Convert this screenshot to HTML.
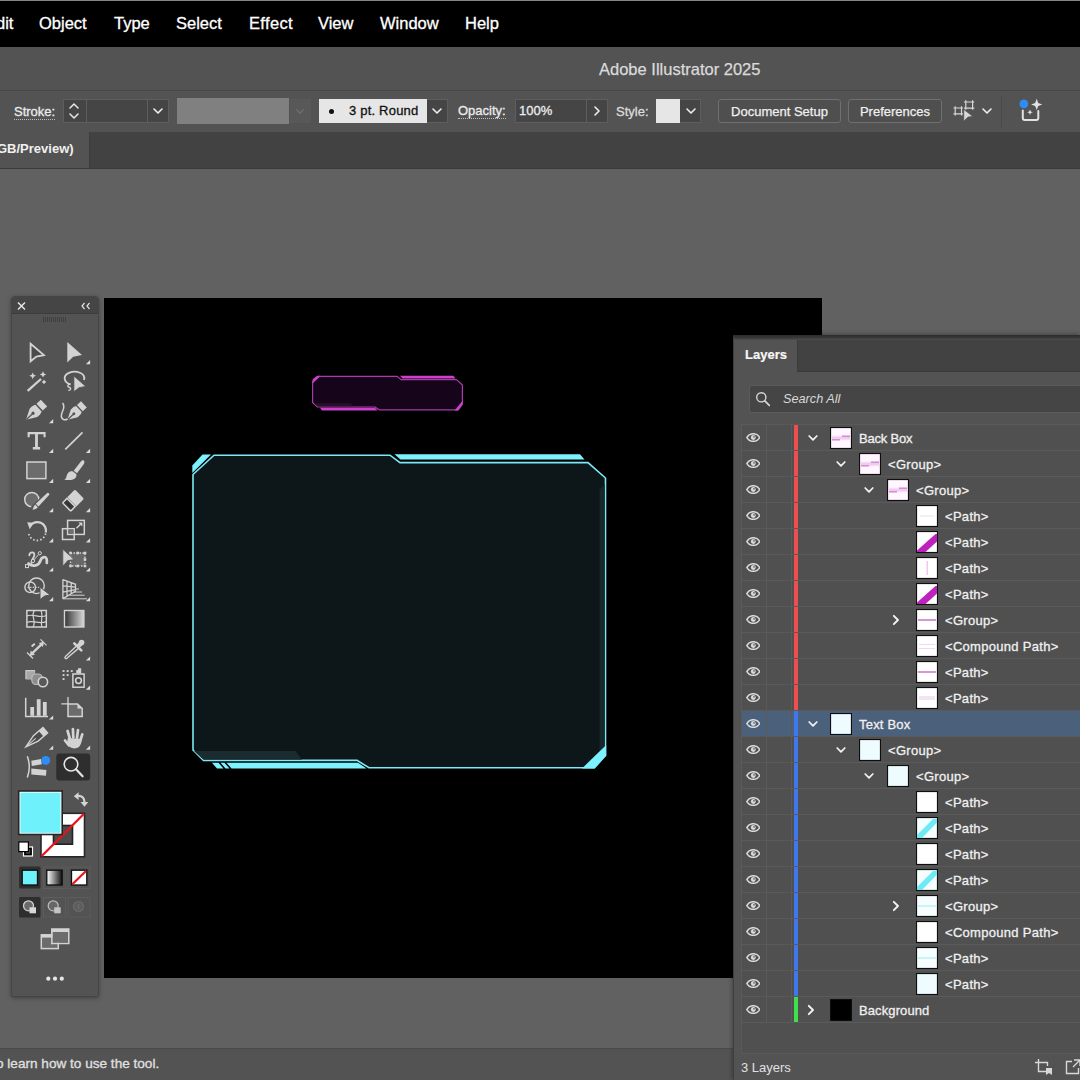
<!DOCTYPE html>
<html><head><meta charset="utf-8">
<style>
*{box-sizing:border-box;margin:0;padding:0}
html,body{width:1080px;height:1080px;overflow:hidden;background:#616161;font-family:"Liberation Sans",sans-serif;color:#e8e8e8}
.abs{position:absolute}
#menubar{left:0;top:0;width:1080px;height:48px;background:#000;border-top:1px solid #858585;border-bottom:1px solid #2b2b2b}
#menubar span{position:absolute;top:13px;font-size:16.5px;color:#fff;line-height:18px;white-space:nowrap;-webkit-text-stroke:0.3px}
#titlebar{left:0;top:47px;width:1080px;height:43px;background:#535353}
#title{left:599px;top:60px;font-size:16.5px;color:#dadada;white-space:nowrap;line-height:18px;-webkit-text-stroke:0.25px}
#ctrl{left:0;top:90px;width:1080px;height:42px;background:#535353;border-top:1px solid #474747}
#tabbar{left:0;top:132px;width:1080px;height:37px;background:#424242;border-bottom:1px solid #3a3a3a}
#tab{left:0;top:132px;width:90px;height:36px;background:#535353;border-right:1px solid #3c3c3c}
#tab span{position:absolute;left:-3px;top:9px;font-size:13px;font-weight:bold;color:#f0f0f0;white-space:nowrap}
.lbl{position:absolute;font-size:13px;color:#ececec;white-space:nowrap;line-height:16px;-webkit-text-stroke:0.3px}
.fld{position:absolute;background:#454545;border:1px solid #5e5e5e}
.btn{position:absolute;-webkit-text-stroke:0.25px;border:1px solid #707070;border-radius:3px;font-size:13px;color:#f0f0f0;text-align:center;line-height:23px;height:24px;background:#4f4f4f;white-space:nowrap}
#artboard{left:104px;top:298px;width:718px;height:680px;background:#000}
#status{left:0;top:1048px;width:1080px;height:32px;background:#535353;border-top:1px solid #4a4a4a}
#status span{-webkit-text-stroke:0.3px;position:absolute;left:-4px;top:7px;font-size:13.6px;color:#e0e0e0;white-space:nowrap}
#tools{left:11px;top:296px;width:88px;height:701px;background:#535353;border:1px solid #454545;border-radius:4px 4px 2px 2px;box-shadow:0 1px 4px rgba(0,0,0,.35)}
#toolshead{left:0;top:0;width:86px;height:17px;background:#454545;border-radius:3px 3px 0 0;border-bottom:1px solid #3c3c3c}
#layers{left:733px;top:335px;width:347px;height:745px;background:#535353;border-left:1px solid #3e3e3e;border-top:1px solid #3e3e3e;box-shadow:-1px -1px 4px rgba(0,0,0,.3)}
.ul{border-bottom:1px dotted #bdbdbd;padding-bottom:0;line-height:15px}
.lname{font-size:13px;color:#f0f0f0;line-height:16px;white-space:nowrap;-webkit-text-stroke:0.3px}
svg{display:block}
</style></head><body>
<div id="menubar" class="abs">
<span style="left:-15px">Edit</span><span style="left:39px">Object</span><span style="left:114px">Type</span><span style="left:176px">Select</span><span style="left:249px;letter-spacing:0.35px">Effect</span><span style="left:318px">View</span><span style="left:380px">Window</span><span style="left:465px">Help</span>
</div>
<div id="titlebar" class="abs"></div>
<div id="title" class="abs">Adobe Illustrator 2025</div>
<div id="ctrl" class="abs"></div>
<!-- control bar contents -->
<div class="lbl ul" style="left:14px;top:104px;">Stroke:</div>
<div class="fld" style="left:63px;top:99px;width:23px;height:24px;border-right:none"></div>
<svg class="abs" style="left:67px;top:101px" width="14" height="20" viewBox="0 0 14 20"><path d="M3 7 L7 3 L11 7 M3 13 L7 17 L11 13" fill="none" stroke="#e8e8e8" stroke-width="1.5" stroke-linecap="round" stroke-linejoin="round"/></svg>
<div class="fld" style="left:86px;top:99px;width:62px;height:24px;background:#454545"></div>
<div class="fld" style="left:148px;top:99px;width:21px;height:24px;border-left:none"></div>
<svg class="abs chev" style="left:152px;top:107px" width="12" height="8" viewBox="0 0 12 8"><path d="M2 2 L6 6 L10 2" fill="none" stroke="#f0f0f0" stroke-width="1.6" stroke-linecap="round" stroke-linejoin="round"/></svg>
<div class="abs" style="left:177px;top:98px;width:112px;height:26px;background:#808080"></div>
<div class="abs" style="left:290px;top:99px;width:21px;height:24px;background:#585858"></div>
<svg class="abs" style="left:295px;top:108px" width="10" height="7" viewBox="0 0 12 8"><path d="M2 2 L6 6 L10 2" fill="none" stroke="#6e6e6e" stroke-width="1.6" stroke-linecap="round" stroke-linejoin="round"/></svg>
<div class="abs" style="left:319px;top:99px;width:108px;height:24px;background:#e6e6e6"></div>
<div class="abs" style="left:329px;top:109px;width:5px;height:5px;border-radius:50%;background:#111"></div>
<div class="lbl" style="left:349px;top:103px;color:#111;letter-spacing:0.2px">3 pt. Round</div>
<div class="fld" style="left:427px;top:99px;width:21px;height:24px;border-left:none"></div>
<svg class="abs" style="left:431px;top:107px" width="12" height="8" viewBox="0 0 12 8"><path d="M2 2 L6 6 L10 2" fill="none" stroke="#f0f0f0" stroke-width="1.6" stroke-linecap="round" stroke-linejoin="round"/></svg>
<div class="lbl ul" style="left:458px;top:103px;">Opacity:</div>
<div class="fld" style="left:515px;top:99px;width:72px;height:24px;"></div>
<div class="lbl" style="left:519px;top:103px;">100%</div>
<div class="fld" style="left:587px;top:99px;width:21px;height:24px;border-left:none"></div>
<svg class="abs" style="left:593px;top:105px" width="8" height="12" viewBox="0 0 8 12"><path d="M2 2 L6 6 L2 10" fill="none" stroke="#f0f0f0" stroke-width="1.6" stroke-linecap="round" stroke-linejoin="round"/></svg>
<div class="lbl" style="left:616px;top:104px;color:#dcdcdc">Style:</div>
<div class="abs" style="left:656px;top:99px;width:24px;height:24px;background:#e6e6e6"></div>
<div class="fld" style="left:680px;top:99px;width:21px;height:24px;border-left:none"></div>
<svg class="abs" style="left:685px;top:107px" width="12" height="8" viewBox="0 0 12 8"><path d="M2 2 L6 6 L10 2" fill="none" stroke="#f0f0f0" stroke-width="1.6" stroke-linecap="round" stroke-linejoin="round"/></svg>
<div class="btn" style="left:718px;top:99px;width:123px;">Document Setup</div>
<div class="btn" style="left:848px;top:99px;width:94px;">Preferences</div>
<svg class="abs" style="left:940px;top:90px" width="120" height="42" viewBox="940 90 120 42"><g fill="none" stroke="#d8d8d8" stroke-width="1.200"><path d="M953.500,108 H963 M953.500,113.800 H963 M955.200,106.300 V115.500 M961.500,106.300 V115.500"/><path d="M964,102 H974.300 M964,108.200 H974.300 M965.800,100.300 V109.800 M972.600,100.300 V109.800"/></g><path d="M963.800,109.500 L972.600,116.300 L968,117 L963.800,121 Z" fill="#d8d8d8" stroke="#535353" stroke-width="0.600"/></svg>
<svg class="abs" style="left:981px;top:107px" width="12" height="8" viewBox="0 0 12 8"><path d="M2 2 L6 6 L10 2" fill="none" stroke="#f0f0f0" stroke-width="1.6" stroke-linecap="round" stroke-linejoin="round"/></svg>
<div class="abs" style="left:1001px;top:95px;width:1px;height:32px;background:#494949"></div>
<svg class="abs" style="left:1010px;top:92px" width="40" height="38" viewBox="1010 92 40 38"><path d="M1022.800,110.500 V118 a2,2 0 0 0 2,2 H1036.300 a2,2 0 0 0 2,-2 V111" fill="none" stroke="#e2e2e2" stroke-width="2" stroke-linecap="round"/><path d="M1036.700,98.800 l1.500,4.100 4.100,1.500 -4.100,1.500 -1.500,4.100 -1.500,-4.100 -4.100,-1.500 4.100,-1.500z" fill="#e2e2e2"/><path d="M1030,109.400 l.8,2 2,.8 -2,.8 -.8,2 -.8,-2 -2,-.8 2,-.8z" fill="#e2e2e2"/><circle cx="1023.900" cy="103.900" r="4.400" fill="#2f8cf2"/></svg>
<div id="tabbar" class="abs"></div>
<div id="tab" class="abs"><span>GB/Preview)</span></div>
<div id="artboard" class="abs"></div>
<!--ART--><svg class="abs" style="left:104px;top:298px" width="718" height="680" viewBox="104 298 718 680">
<!-- magenta back box -->
<path d="M312.6,381.600 L319.500,376.300 L397,376.300 L401,379.600 L456.500,379.600 L462.400,385 L462.400,402.600 L457.500,409.800 L379,409.800 L375,407 L317.500,407 L312.600,402.500 Z" fill="#16041a" stroke="#a73ba9" stroke-width="1.2" stroke-linejoin="round"/>
<path d="M312.600,383.500 L312.600,379.300 L317,375.800 L320.500,375.800 Z" fill="#cc40cc"/>
<path d="M400,375.700 L453.500,375.700 L455.500,378.400 L402.500,378.400 Z" fill="#cc40cc"/>
<path d="M320,407.700 L375,407.700 L377.500,410.400 L322,410.400 Z" fill="#cc40cc"/>
<path d="M462.800,400.500 L462.800,404.500 L458.500,410.400 L454.500,410.400 Z" fill="#cc40cc"/>
<path d="M313.800,403.200 L351,403.200 L353,406.300 L317.500,406.300 Z" fill="#2a0f2d"/>
<!-- cyan text box -->
<path d="M193,474.500 L214,455.200 L390,455.200 L400,462.600 L588,462.600 L605.500,478 L605.500,755.500 L594.500,767.700 L369,767.700 L357,760.400 L203.500,760.400 L193,750 Z" fill="#0d1719" stroke="#7ceaf6" stroke-width="1.6" stroke-linejoin="miter"/>
<path d="M194,751 L295.500,751 L302,759.700 L203.500,759.700 Z" fill="#1a2c2f"/>
<path d="M599.500,490 L604.700,484 L604.700,755 L599.500,760 Z" fill="#17272a"/>
<path d="M192.300,465.500 L202.500,454.500 L211,454.500 L192.300,473 Z" fill="#7df2fe"/>
<path d="M394.500,454.300 L580,454.300 L584.500,459.600 L400.500,459.600 Z" fill="#7df2fe"/>
<path d="M606.200,745 L606.200,755.500 L594.500,768.400 L582,768.400 Z" fill="#7df2fe"/>
<path d="M212,762.700 L218.500,762.700 L223.500,768.400 L217,768.400 Z" fill="#7df2fe"/>
<path d="M220.500,762.700 L224.500,762.700 L229.500,768.400 L225.500,768.400 Z" fill="#7df2fe"/>
<path d="M226.500,762.700 L358,762.700 L366.500,768.400 L231.500,768.400 Z" fill="#7df2fe"/>
</svg>
<!--/ART-->
<div id="status" class="abs"><span>o learn how to use the tool.</span></div>
<div id="tools" class="abs"><div id="toolshead" class="abs"></div></div>
<!--TOOLS--><svg class="abs" style="left:11px;top:296px" width="88" height="701" viewBox="11 296 88 701"><path d="M18,302.500 L25,309.500 M25,302.500 L18,309.500" stroke="#e6e6e6" stroke-width="1.500" fill="none"/>
<path d="M84.500,303 L82,306 L84.500,309 M89.500,303 L87,306 L89.500,309" stroke="#e0e0e0" stroke-width="1.200" fill="none"/>
<g stroke="#3f3f3f" stroke-width="1"><path d="M43.5,317 V322"/><path d="M45.5,317 V322"/><path d="M47.5,317 V322"/><path d="M49.5,317 V322"/><path d="M51.5,317 V322"/><path d="M53.5,317 V322"/><path d="M55.5,317 V322"/><path d="M57.5,317 V322"/><path d="M59.5,317 V322"/><path d="M61.5,317 V322"/><path d="M63.5,317 V322"/><path d="M65.5,317 V322"/></g>
<path d="M90.1,360.1 V364.3 H85.89999999999999 Z" fill="#dcdcdc"/>
<path d="M53.2,419.1 V423.3 H49.0 Z" fill="#dcdcdc"/>
<path d="M53.2,448.8 V453 H49.0 Z" fill="#dcdcdc"/>
<path d="M90.1,448.8 V453 H85.89999999999999 Z" fill="#dcdcdc"/>
<path d="M53.2,478.8 V483 H49.0 Z" fill="#dcdcdc"/>
<path d="M90.1,478.8 V483 H85.89999999999999 Z" fill="#dcdcdc"/>
<path d="M53.2,508.09999999999997 V512.3 H49.0 Z" fill="#dcdcdc"/>
<path d="M90.1,508.09999999999997 V512.3 H85.89999999999999 Z" fill="#dcdcdc"/>
<path d="M53.2,538.1999999999999 V542.4 H49.0 Z" fill="#dcdcdc"/>
<path d="M90.1,538.1999999999999 V542.4 H85.89999999999999 Z" fill="#dcdcdc"/>
<path d="M53.2,567.4 V571.6 H49.0 Z" fill="#dcdcdc"/>
<path d="M90.1,567.4 V571.6 H85.89999999999999 Z" fill="#dcdcdc"/>
<path d="M53.2,597.0 V601.2 H49.0 Z" fill="#dcdcdc"/>
<path d="M90.1,597.0 V601.2 H85.89999999999999 Z" fill="#dcdcdc"/>
<path d="M90.1,656.4 V660.6 H85.89999999999999 Z" fill="#dcdcdc"/>
<path d="M90.1,685.5999999999999 V689.8 H85.89999999999999 Z" fill="#dcdcdc"/>
<path d="M53.2,715.4 V719.6 H49.0 Z" fill="#dcdcdc"/>
<path d="M53.2,745.5 V749.7 H49.0 Z" fill="#dcdcdc"/>
<path d="M90.1,745.5 V749.7 H85.89999999999999 Z" fill="#dcdcdc"/>
<path d="M30.600,343.700 L43.900,355.100 L36.400,356.500 L30.600,361.300 Z" fill="#4b4b4b" stroke="#d3d3d3" stroke-width="1.800" stroke-linejoin="miter"/>
<path d="M67.300,342 L82,355 L73.200,356.800 L67.300,362.600 Z" fill="#d3d3d3"/>
<path d="M27.600,390.800 L41,379" stroke="#d3d3d3" stroke-width="2.300" fill="none"/>
<path d="M32.7,372.40000000000003 L33.720000000000006,374.78000000000003 L36.1,375.8 L33.720000000000006,376.82 L32.7,379.2 L31.680000000000003,376.82 L29.300000000000004,375.8 L31.680000000000003,374.78000000000003 Z" fill="#d3d3d3"/>
<path d="M43,371.2 L44.02,373.38 L46.2,374.4 L44.02,375.41999999999996 L43,377.59999999999997 L41.98,375.41999999999996 L39.8,374.4 L41.98,373.38 Z" fill="#d3d3d3"/>
<path d="M44,379.7 L44.96,381.04 L46.3,382 L44.96,382.96 L44,384.3 L43.04,382.96 L41.7,382 L43.04,381.04 Z" fill="#d3d3d3"/>
<path d="M70.500,384.300 C63.500,382.500 62.500,375.500 69,372.800 C76,370 86,373 84,380" stroke="#d3d3d3" stroke-width="1.800" fill="none"/>
<path d="M70.500,384.300 c-3,-0.500 -3.500,2.500 -1.200,3 c2.200,0.500 1.500,3.300 -1,3" stroke="#d3d3d3" stroke-width="1.400" fill="none"/>
<path d="M73.900,376 L85.800,386.400 L79,387.700 L73.900,391.800 Z" fill="#d3d3d3" stroke="#535353" stroke-width="0.800"/>
<g transform="translate(26,419.8) rotate(47) scale(1.07)"><path d="M0,0 L-5.200,-9.500 C-5.600,-12.500 -5,-14.500 -4.200,-16 L4.200,-16 C5,-14.500 5.600,-12.500 5.200,-9.500 Z" fill="#d3d3d3"/><path d="M0,-0.500 L0,-8" stroke="#535353" stroke-width="1.200"/><circle cx="0" cy="-9" r="1.500" fill="#535353"/><rect x="-4.300" y="-23" width="8.600" height="5.600" fill="#d3d3d3"/></g>
<g transform="translate(67.4,419.8) rotate(47) scale(0.98)"><path d="M0,0 L-5.200,-9.500 C-5.600,-12.500 -5,-14.500 -4.200,-16 L4.200,-16 C5,-14.500 5.600,-12.500 5.200,-9.500 Z" fill="#d3d3d3"/><path d="M0,-0.500 L0,-8" stroke="#535353" stroke-width="1.200"/><circle cx="0" cy="-9" r="1.500" fill="#535353"/><rect x="-4.300" y="-23" width="8.600" height="5.600" fill="#d3d3d3"/></g>
<path d="M62.600,403 C66.500,408 60.500,412.500 61.300,416.500 C62,420.500 65.500,420.300 67.500,419" stroke="#d3d3d3" stroke-width="1.500" fill="none"/>
<path d="M27.600,432 H45.600 V437.200 H43.500 V434.300 H37.900 V447.100 H40.100 V449.400 H32.800 V447.100 H35.100 V434.300 H29.700 V437.200 H27.600 Z" fill="#d3d3d3"/>
<path d="M65.300,449.300 L82.500,432.300" stroke="#d3d3d3" stroke-width="1.700"/>
<rect x="26.900" y="462" width="19" height="16.600" fill="#6c6c6c" stroke="#d3d3d3" stroke-width="1.500"/>
<path d="M83.800,460.500 C84.800,461.500 84.500,463 83.500,464.500 L77,473.300 L73.700,470.700 L80.500,462 C81.600,460.500 82.800,459.900 83.800,460.500 Z" fill="#d3d3d3"/>
<path d="M73,471.500 L76.200,474.100 C77.500,477 74.500,479.800 71,480 C68.500,480.200 66,480 64.200,479.800 C67,478.300 66,475.500 68,473 C69.500,471.200 71.500,470.800 73,471.500 Z" fill="#d3d3d3"/>
<circle cx="31.800" cy="499.600" r="7.100" fill="#6c6c6c" stroke="#d3d3d3" stroke-width="1.500"/>
<path d="M48.300,494.300 L33,509.300" stroke="#535353" stroke-width="6.200"/>
<path d="M49.300,494.800 C49.800,493.600 48.200,492.300 47.200,493 L35.800,503.800 L38.500,506.500 Z" fill="#d3d3d3"/>
<path d="M35.200,504.500 L37.900,507.200 C36.500,509 34.500,509.700 32.300,509.600 C33.600,508.200 33.400,506 35.200,504.500 Z" fill="#d3d3d3"/>
<g transform="translate(67.200,506.400) rotate(45)"><path d="M-6.500,-10.500 V-15.900 a1.500,1.500 0 0 1 1.500,-1.500 H5 a1.500,1.500 0 0 1 1.500,1.500 V-6.500 H-6.500 Z" fill="#d3d3d3"/><path d="M-5.800,-5.500 H5.800 V-0.200 a1,1 0 0 1 -1,1 H-4.800 a1,1 0 0 1 -1,-1 Z" fill="#3c3c3c" stroke="#d3d3d3" stroke-width="1.500"/><rect x="-3.600" y="-3.800" width="7.200" height="2.800" fill="#333" stroke="#3c3c3c"/></g>
<path d="M30.300,525.800 A8.600,8.600 0 0 1 45.800,532.500" stroke="#d3d3d3" stroke-width="2.300" fill="none"/>
<path d="M27.200,522.200 L33.400,522.800 L29.800,529.300 Z" fill="#d3d3d3"/>
<path d="M45.600,533.500 A8.600,8.600 0 0 1 28.600,532.800" stroke="#d3d3d3" stroke-width="1.800" stroke-dasharray="1.500 2.100" fill="none"/>
<rect x="67.600" y="520.400" width="16.700" height="14" fill="#4e4e4e" stroke="#d3d3d3" stroke-width="1.500"/>
<rect x="62.500" y="528.700" width="11.700" height="10.800" fill="none" stroke="#d3d3d3" stroke-width="1.500"/>
<rect x="68.400" y="529.500" width="5" height="4.300" fill="#6e6e6e"/>
<path d="M76.500,528.200 L81.300,523.400" stroke="#d3d3d3" stroke-width="1.400"/><path d="M78.300,522.400 H82.300 V526.400 Z" fill="#d3d3d3"/>
<path d="M28.500,563.500 C33,567.500 39,565.500 40.500,560.500 C41.800,556.500 46.500,555.500 46.800,560 L46.800,563" stroke="#d3d3d3" stroke-width="2.700" fill="none" stroke-linecap="round"/>
<path d="M29.300,555.300 C29.800,551.300 35,551.300 34.300,555.500 C33.800,558.500 30.500,560 31.500,563" stroke="#d3d3d3" stroke-width="1.800" fill="none" stroke-linecap="round"/>
<path d="M33,561 L39.500,553.500" stroke="#d3d3d3" stroke-width="1"/><circle cx="39.800" cy="553.200" r="1.600" fill="#535353" stroke="#d3d3d3" stroke-width="1"/><circle cx="33" cy="561" r="1.600" fill="#535353" stroke="#d3d3d3" stroke-width="1"/>
<rect x="25.500" y="564.600" width="3" height="3" fill="#535353" stroke="#d3d3d3" stroke-width="1"/>
<rect x="70.500" y="553" width="14.500" height="13" fill="#676767" stroke="#d3d3d3" stroke-width="1.300" stroke-dasharray="1.600 1.400"/>
<rect x="69.2" y="551.7" width="2.600" height="2.600" fill="#d3d3d3"/>
<rect x="83.7" y="551.7" width="2.600" height="2.600" fill="#d3d3d3"/>
<rect x="83.7" y="564.7" width="2.600" height="2.600" fill="#d3d3d3"/>
<rect x="69.2" y="564.7" width="2.600" height="2.600" fill="#d3d3d3"/>
<rect x="76.4" y="551.7" width="2.600" height="2.600" fill="#d3d3d3"/>
<rect x="76.4" y="564.7" width="2.600" height="2.600" fill="#d3d3d3"/>
<rect x="83.7" y="558.2" width="2.600" height="2.600" fill="#d3d3d3"/>
<path d="M62.800,549.200 L74.200,559.600 L67.800,560.600 L62.800,566.200 Z" fill="#d3d3d3" stroke="#535353" stroke-width="0.800"/>
<circle cx="36.500" cy="585.800" r="7.800" fill="none" stroke="#d3d3d3" stroke-width="1.400"/>
<circle cx="30.200" cy="587.300" r="5.300" fill="none" stroke="#d3d3d3" stroke-width="1.400"/>
<path d="M27.500,587.300 H40" stroke="#d3d3d3" stroke-width="1.300" stroke-dasharray="1.300 1.300"/>
<path d="M40,587 L50,595 L44.600,596.100 L40,599.600 Z" fill="#d3d3d3" stroke="#535353" stroke-width="1"/>
<g stroke="#d3d3d3" stroke-width="1.300" fill="none"><path d="M62.900,579.200 V599 M62.900,579.600 L75.500,584.300 V591.200 L62.900,598.600 M67,581.200 V596.300 M71.200,582.700 V593.800 M62.900,585.800 L75.500,587.200 M62.900,592.200 L75.500,589.600"/><path d="M75.500,589 H79 M73.500,592 H82 M69.500,595.200 H84.500 M62.900,598.800 H87" stroke-width="1"/></g>
<rect x="26.900" y="610.500" width="19.400" height="16.500" fill="#474747" stroke="#d3d3d3" stroke-width="1.500"/>
<g stroke="#d3d3d3" stroke-width="1.200" fill="none"><path d="M34.500,610.500 C30,616 37,621 33,627"/><path d="M41,610.500 C43.500,616 40,622 42,627"/><path d="M26.900,616 C33,613 40,619 46.300,615.500"/><path d="M26.900,622.500 C33,619.500 40,625 46.300,621.500"/></g>
<defs><linearGradient id="gg" x1="0" x2="1"><stop offset="0" stop-color="#333"/><stop offset="1" stop-color="#d8d8d8"/></linearGradient><linearGradient id="g2" x1="0" x2="1"><stop offset="0" stop-color="#fff"/><stop offset="1" stop-color="#111"/></linearGradient></defs>
<rect x="64.500" y="610.500" width="19.400" height="16.500" fill="url(#gg)" stroke="#d3d3d3" stroke-width="1.400"/>
<path d="M31.500,654 L42.200,643.600" stroke="#d3d3d3" stroke-width="2.400"/>
<path d="M27,652.500 L33,658.500 M40.500,639.400 L46.500,645.400" stroke="#d3d3d3" stroke-width="1.300"/>
<path d="M29.600,655.900 L30.800,650.600 L34.900,654.700 Z M44.100,641.700 L42.900,647 L38.800,642.900 Z" fill="#d3d3d3"/>
<path d="M31.600,646.600 L34.800,643.800" stroke="#d3d3d3" stroke-width="2"/>
<path d="M76.200,646.200 L65.500,656.400 C64.200,657.700 65.300,659.300 66.900,658.300 L78.400,648.400" fill="#4b4b4b" stroke="#d3d3d3" stroke-width="1.400"/>
<path d="M74.300,643.300 L81.300,650.300" stroke="#d3d3d3" stroke-width="2.600" stroke-linecap="round"/>
<path d="M78,646.500 L81.500,642.800" stroke="#d3d3d3" stroke-width="4.400" stroke-linecap="butt"/><circle cx="81.600" cy="642.600" r="2.800" fill="#d3d3d3"/>
<rect x="25.300" y="670" width="9.800" height="9.300" fill="#c9c9c9"/><rect x="26.500" y="671.200" width="8.600" height="8.100" fill="#a8a8a8"/>
<rect x="31.800" y="674" width="10.500" height="10.500" rx="4.200" fill="#8d8d8d" stroke="#bdbdbd" stroke-width="1.200"/>
<circle cx="42.900" cy="682" r="4.700" fill="#595959" stroke="#d3d3d3" stroke-width="1.600"/>
<rect x="62.6" y="670.1" width="1.900" height="1.900" fill="#d3d3d3"/>
<rect x="66.69999999999999" y="670.1" width="1.900" height="1.900" fill="#d3d3d3"/>
<rect x="70.8" y="670.1" width="1.900" height="1.900" fill="#d3d3d3"/>
<rect x="62.6" y="674.1" width="1.900" height="1.900" fill="#d3d3d3"/>
<rect x="66.69999999999999" y="674.1" width="1.900" height="1.900" fill="#d3d3d3"/>
<rect x="62.6" y="678.1" width="1.900" height="1.900" fill="#d3d3d3"/>
<rect x="72.900" y="674" width="11.200" height="13.200" fill="#4b4b4b" stroke="#d3d3d3" stroke-width="1.500"/>
<circle cx="78.500" cy="680.600" r="2.900" fill="none" stroke="#d3d3d3" stroke-width="1.600"/>
<path d="M76.300,673.500 V670 H78 V668.300 H81.200 V673.500 Z" fill="#d3d3d3"/>
<path d="M25.700,697.800 V716.500 H48" stroke="#d3d3d3" stroke-width="1.500" fill="none"/>
<rect x="30.300" y="707" width="3.800" height="8.800" fill="#d3d3d3"/><rect x="36.800" y="699.200" width="3.800" height="16.600" fill="#d3d3d3"/><rect x="42.900" y="702" width="3.800" height="13.800" fill="#d3d3d3"/>
<path d="M68,703.900 H77.500 L82.200,708.600 V716.400 H68 Z" fill="#6c6c6c" stroke="#d3d3d3" stroke-width="1.500"/>
<path d="M77.500,703.900 V708.600 H82.200 Z" fill="#d3d3d3"/>
<path d="M61.300,703.900 H68 M68,697 V703.900" stroke="#d3d3d3" stroke-width="1.300"/>
<g transform="translate(25.900,746.800) rotate(49.500)"><path d="M0,0 L-3.600,-13 V-25.500 H3.600 V-13 Z" fill="#4b4b4b" stroke="#d3d3d3" stroke-width="1.400" stroke-linejoin="miter"/><rect x="-3.600" y="-25.500" width="7.200" height="5.500" fill="#d3d3d3"/><path d="M0,-1 V-13" stroke="#d3d3d3" stroke-width="1"/></g>
<g stroke="#d3d3d3" stroke-width="2.700" stroke-linecap="round" fill="none"><path d="M69.800,738.500 L67.600,731"/><path d="M73.300,737.500 L72.900,729"/><path d="M77,737.800 L78,730"/><path d="M80.300,740.500 L82.300,734.300"/><path d="M69,745.300 L65,740.500"/></g>
<path d="M67.800,738 L81.800,739 C81.500,743.500 80,747.500 76,748.300 C72,749 69,747.200 67,743.500 Z" fill="#d3d3d3"/>
<path d="M27.300,756.200 C29.800,763 29.800,771 27.300,777.500" stroke="#d3d3d3" stroke-width="1.500" fill="none"/>
<path d="M31.300,760.800 L41,759 L41.800,764.300 L31.800,766 Z" fill="#d3d3d3"/><path d="M31.300,768.500 L46.400,770 L46,775.800 L31.300,774.600 Z" fill="#d3d3d3"/>
<circle cx="45.700" cy="760.400" r="4.500" fill="#2d8df5"/>
<rect x="56.300" y="753.400" width="33.900" height="27" rx="3" fill="#2e2e2e"/>
<circle cx="71" cy="764.200" r="6.800" fill="none" stroke="#e4e4e4" stroke-width="1.600"/><path d="M76,769.300 L82.600,776.300" stroke="#e4e4e4" stroke-width="2.200" stroke-linecap="round"/>
<rect x="41" y="813.300" width="43.500" height="43.500" fill="#fff" stroke="#262626" stroke-width="1.600"/>
<rect x="53.500" y="825.500" width="19" height="18.700" fill="#4b4b4b" stroke="#222" stroke-width="1.600"/>
<path d="M41.500,856.300 L84,813.800" stroke="#e8141c" stroke-width="2.300"/>
<rect x="18.700" y="791" width="43.500" height="43.500" fill="#fff" stroke="#262626" stroke-width="1.600"/>
<rect x="20.400" y="792.700" width="40.100" height="40.100" fill="#6ff1fb"/>
<path d="M77.500,796 C82.500,795.500 84.500,798.500 84.500,802.500" stroke="#d3d3d3" stroke-width="2.200" fill="none"/>
<path d="M73.800,796.300 L78.600,792.200 L78.600,800 Z M84.500,806.800 L80.500,802 L88.300,802 Z" fill="#d3d3d3"/>
<rect x="23.500" y="847" width="9" height="9" fill="#000" stroke="#fff" stroke-width="1.200"/><rect x="25.800" y="849.300" width="4.400" height="4.400" fill="#4b4b4b"/>
<rect x="18.800" y="842" width="9.600" height="9.600" fill="#fff" stroke="#000" stroke-width="1.200"/>
<rect x="19" y="866.500" width="21.500" height="22" rx="1.500" fill="#2e2e2e"/>
<rect x="43.500" y="867" width="21.800" height="21.500" fill="none" stroke="#5d5d5d" stroke-width="1"/>
<rect x="68" y="867" width="22" height="21.500" fill="none" stroke="#5d5d5d" stroke-width="1"/>
<rect x="22.200" y="870.200" width="15.300" height="14.800" fill="#6ff1fb" stroke="#0c0c0c" stroke-width="1.300"/>
<rect x="46.800" y="870.200" width="15.300" height="14.800" fill="url(#g2)" stroke="#0c0c0c" stroke-width="1.300"/>
<rect x="71.500" y="870.200" width="15.300" height="14.800" fill="#fff" stroke="#0c0c0c" stroke-width="1.300"/><path d="M72.300,884.300 L86,871" stroke="#e8141c" stroke-width="2.200"/>
<rect x="19" y="897" width="21.500" height="20.500" rx="1.500" fill="#2e2e2e"/>
<rect x="43.500" y="897.500" width="21.800" height="19.500" fill="none" stroke="#5d5d5d" stroke-width="1"/>
<rect x="68" y="897.500" width="22" height="19.500" fill="none" stroke="#5d5d5d" stroke-width="1"/>
<circle cx="28.5" cy="905.8" r="5" fill="#6a6a6a" stroke="#cfcfcf" stroke-width="1.300"/><rect x="29.5" y="907.3" width="6.500" height="6" fill="#d8d8d8"/>
<circle cx="53.2" cy="905.8" r="5" fill="#666" stroke="#b9b9b9" stroke-width="1.300"/><rect x="54.2" y="907.3" width="6.500" height="6" fill="#c4c4c4"/>
<circle cx="78.500" cy="906.500" r="5" fill="#5d5d5d" stroke="#6a6a6a" stroke-width="1.200"/><path d="M78.500,904 V909" stroke="#6a6a6a" stroke-width="1.500"/>
<rect x="51.800" y="929" width="17" height="14.500" fill="#6c6c6c" stroke="#d3d3d3" stroke-width="1.500"/><rect x="51.800" y="929" width="17" height="3" fill="#d3d3d3"/>
<rect x="41.300" y="934.800" width="17" height="13.800" fill="#6c6c6c" stroke="#d3d3d3" stroke-width="1.500"/><rect x="41.300" y="934.800" width="17" height="2.800" fill="#d3d3d3"/>
<rect x="52.500" y="932" width="15.500" height="10.700" fill="#6c6c6c"/><rect x="51.100" y="931.500" width="1.500" height="12.700" fill="#d3d3d3"/><rect x="51.100" y="942.800" width="8" height="1.400" fill="#d3d3d3"/>
<circle cx="48.3" cy="978.700" r="2.100" fill="#e6e6e6"/>
<circle cx="55" cy="978.700" r="2.100" fill="#e6e6e6"/>
<circle cx="61.8" cy="978.700" r="2.100" fill="#e6e6e6"/></svg><!--/TOOLS-->
<!--LAY--><div id="layers" class="abs">
<div class="abs" style="left:-1px;top:-1px;width:347px;height:5px;background:linear-gradient(#2c2c2c,#3a3a3a 60%,#505050)"></div>
<div class="abs" style="left:63px;top:4px;width:283px;height:32px;background:#424242;border-left:1px solid #3a3a3a;border-bottom:1px solid #3a3a3a"></div>
<div class="abs" style="left:11px;top:11px;font-size:13px;font-weight:bold;color:#f6f6f6;line-height:16px;-webkit-text-stroke:0.2px">Layers</div>
<div class="abs" style="left:15px;top:49px;width:340px;height:28px;background:#454545;border:1px solid #5c5c5c;border-radius:3px"></div>
<svg class="abs" style="left:21px;top:55px" width="16" height="16" viewBox="0 0 16 16"><circle cx="6.300" cy="6.300" r="4.600" fill="none" stroke="#d6d6d6" stroke-width="1.400"/><path d="M9.800,9.800 L14.300,14.300" stroke="#d6d6d6" stroke-width="1.700" stroke-linecap="round"/></svg>
<div class="abs" style="left:49px;top:55px;font-size:12.7px;font-style:italic;color:#d8d8d8;line-height:16px;white-space:nowrap">Search All</div>
<div class="abs" style="left:7px;top:88px;width:339px;height:629px;background:#505050"></div>
<div class="abs" style="left:7px;top:717px;width:339px;height:1px;background:#5a5a5a"></div>
<div class="abs" style="left:7px;top:88px;width:339px;height:1px;background:#5a5a5a"></div>
<div class="abs" style="left:11.5px;top:96.5px;width:16px;height:10px;"><svg width="14.600" height="9.100" viewBox="0 0 16 10"><path d="M0.900,5 C3,1.500 5.500,0.800 8,0.800 C10.500,0.800 13,1.500 15.100,5 C13,8.500 10.500,9.200 8,9.200 C5.500,9.200 3,8.500 0.900,5 Z" fill="none" stroke="#dadada" stroke-width="1.700"/><circle cx="8" cy="5" r="2.700" fill="#dadada"/><circle cx="8.800" cy="4.300" r="0.900" fill="#555"/></svg></div>
<div class="abs" style="left:60px;top:89px;width:4px;height:25px;background:#f04d4f"></div>
<div class="abs" style="left:73px;top:98px;width:12px;height:8px;"><svg width="12" height="8" viewBox="-0.600 -0.400 13.200 8.800"><path d="M1.800,1.800 L6,6 L10.200,1.800" fill="none" stroke="#f4f4f4" stroke-width="1.900" stroke-linecap="round" stroke-linejoin="round"/></svg></div>
<div class="abs" style="left:96px;top:90.5px;width:22px;height:22px;"><svg width="22" height="22" viewBox="-1 -1 22 22" style="display:block"><rect x="-0.500" y="-0.500" width="21" height="21" fill="#fff6ff" stroke="#0e0e0e" stroke-width="1.200"/><g><rect x="1" y="7.800" width="18" height="4.400" fill="#f6dcf6"/><rect x="1" y="11.300" width="8" height="1.100" fill="#c470c4"/><rect x="11" y="7.600" width="8" height="1.100" fill="#c470c4"/><rect x="1" y="9.600" width="18" height="0.800" fill="#e6b4e6"/></g></svg></div>
<div class="abs lname" style="left:125px;top:94.5px;letter-spacing:-0.2px">Back Box</div>
<div class="abs" style="left:7px;top:114px;width:339px;height:1px;background:#5a5a5a"></div>
<div class="abs" style="left:11.5px;top:122.5px;width:16px;height:10px;"><svg width="14.600" height="9.100" viewBox="0 0 16 10"><path d="M0.900,5 C3,1.500 5.500,0.800 8,0.800 C10.500,0.800 13,1.500 15.100,5 C13,8.500 10.500,9.200 8,9.200 C5.500,9.200 3,8.500 0.900,5 Z" fill="none" stroke="#dadada" stroke-width="1.700"/><circle cx="8" cy="5" r="2.700" fill="#dadada"/><circle cx="8.800" cy="4.300" r="0.900" fill="#555"/></svg></div>
<div class="abs" style="left:60px;top:115px;width:4px;height:25px;background:#f04d4f"></div>
<div class="abs" style="left:101px;top:124px;width:12px;height:8px;"><svg width="12" height="8" viewBox="-0.600 -0.400 13.200 8.800"><path d="M1.800,1.800 L6,6 L10.200,1.800" fill="none" stroke="#f4f4f4" stroke-width="1.900" stroke-linecap="round" stroke-linejoin="round"/></svg></div>
<div class="abs" style="left:125px;top:116.5px;width:22px;height:22px;"><svg width="22" height="22" viewBox="-1 -1 22 22" style="display:block"><rect x="-0.500" y="-0.500" width="21" height="21" fill="#fff6ff" stroke="#0e0e0e" stroke-width="1.200"/><g><rect x="1" y="7.800" width="18" height="4.400" fill="#f6dcf6"/><rect x="1" y="11.300" width="8" height="1.100" fill="#c470c4"/><rect x="11" y="7.600" width="8" height="1.100" fill="#c470c4"/><rect x="1" y="9.600" width="18" height="0.800" fill="#e6b4e6"/></g></svg></div>
<div class="abs lname" style="left:154px;top:120.5px;letter-spacing:0.3px">&lt;Group&gt;</div>
<div class="abs" style="left:7px;top:140px;width:339px;height:1px;background:#5a5a5a"></div>
<div class="abs" style="left:11.5px;top:148.5px;width:16px;height:10px;"><svg width="14.600" height="9.100" viewBox="0 0 16 10"><path d="M0.900,5 C3,1.500 5.500,0.800 8,0.800 C10.500,0.800 13,1.500 15.100,5 C13,8.500 10.500,9.200 8,9.200 C5.500,9.200 3,8.500 0.900,5 Z" fill="none" stroke="#dadada" stroke-width="1.700"/><circle cx="8" cy="5" r="2.700" fill="#dadada"/><circle cx="8.800" cy="4.300" r="0.900" fill="#555"/></svg></div>
<div class="abs" style="left:60px;top:141px;width:4px;height:25px;background:#f04d4f"></div>
<div class="abs" style="left:129px;top:150px;width:12px;height:8px;"><svg width="12" height="8" viewBox="-0.600 -0.400 13.200 8.800"><path d="M1.800,1.800 L6,6 L10.200,1.800" fill="none" stroke="#f4f4f4" stroke-width="1.900" stroke-linecap="round" stroke-linejoin="round"/></svg></div>
<div class="abs" style="left:153px;top:142.5px;width:22px;height:22px;"><svg width="22" height="22" viewBox="-1 -1 22 22" style="display:block"><rect x="-0.500" y="-0.500" width="21" height="21" fill="#fff6ff" stroke="#0e0e0e" stroke-width="1.200"/><g><rect x="1" y="7.800" width="18" height="4.400" fill="#f6dcf6"/><rect x="1" y="11.300" width="8" height="1.100" fill="#c470c4"/><rect x="11" y="7.600" width="8" height="1.100" fill="#c470c4"/><rect x="1" y="9.600" width="18" height="0.800" fill="#e6b4e6"/></g></svg></div>
<div class="abs lname" style="left:182px;top:146.5px;letter-spacing:0.3px">&lt;Group&gt;</div>
<div class="abs" style="left:7px;top:166px;width:339px;height:1px;background:#5a5a5a"></div>
<div class="abs" style="left:11.5px;top:174.5px;width:16px;height:10px;"><svg width="14.600" height="9.100" viewBox="0 0 16 10"><path d="M0.900,5 C3,1.500 5.500,0.800 8,0.800 C10.500,0.800 13,1.500 15.100,5 C13,8.500 10.500,9.200 8,9.200 C5.500,9.200 3,8.500 0.900,5 Z" fill="none" stroke="#dadada" stroke-width="1.700"/><circle cx="8" cy="5" r="2.700" fill="#dadada"/><circle cx="8.800" cy="4.300" r="0.900" fill="#555"/></svg></div>
<div class="abs" style="left:60px;top:167px;width:4px;height:25px;background:#f04d4f"></div>
<div class="abs" style="left:182px;top:168.5px;width:22px;height:22px;"><svg width="22" height="22" viewBox="-1 -1 22 22" style="display:block"><rect x="-0.500" y="-0.500" width="21" height="21" fill="#fff" stroke="#0e0e0e" stroke-width="1.200"/><g><rect x="3" y="9.500" width="14" height="1" fill="#f0dff0"/></g></svg></div>
<div class="abs lname" style="left:211px;top:172.5px;letter-spacing:0.3px">&lt;Path&gt;</div>
<div class="abs" style="left:7px;top:192px;width:339px;height:1px;background:#5a5a5a"></div>
<div class="abs" style="left:11.5px;top:200.5px;width:16px;height:10px;"><svg width="14.600" height="9.100" viewBox="0 0 16 10"><path d="M0.900,5 C3,1.500 5.500,0.800 8,0.800 C10.500,0.800 13,1.500 15.100,5 C13,8.500 10.500,9.200 8,9.200 C5.500,9.200 3,8.500 0.900,5 Z" fill="none" stroke="#dadada" stroke-width="1.700"/><circle cx="8" cy="5" r="2.700" fill="#dadada"/><circle cx="8.800" cy="4.300" r="0.900" fill="#555"/></svg></div>
<div class="abs" style="left:60px;top:193px;width:4px;height:25px;background:#f04d4f"></div>
<div class="abs" style="left:182px;top:194.5px;width:22px;height:22px;"><svg width="22" height="22" viewBox="-1 -1 22 22" style="display:block"><rect x="-0.500" y="-0.500" width="21" height="21" fill="#fff" stroke="#0e0e0e" stroke-width="1.200"/><g><path d="M0,20 L0,18.500 L18.500,2 L20,2 L20,9.500 L8.500,20 Z" fill="#bd22bd"/></g></svg></div>
<div class="abs lname" style="left:211px;top:198.5px;letter-spacing:0.3px">&lt;Path&gt;</div>
<div class="abs" style="left:7px;top:218px;width:339px;height:1px;background:#5a5a5a"></div>
<div class="abs" style="left:11.5px;top:226.5px;width:16px;height:10px;"><svg width="14.600" height="9.100" viewBox="0 0 16 10"><path d="M0.900,5 C3,1.500 5.500,0.800 8,0.800 C10.500,0.800 13,1.500 15.100,5 C13,8.500 10.500,9.200 8,9.200 C5.500,9.200 3,8.500 0.900,5 Z" fill="none" stroke="#dadada" stroke-width="1.700"/><circle cx="8" cy="5" r="2.700" fill="#dadada"/><circle cx="8.800" cy="4.300" r="0.900" fill="#555"/></svg></div>
<div class="abs" style="left:60px;top:219px;width:4px;height:25px;background:#f04d4f"></div>
<div class="abs" style="left:182px;top:220.5px;width:22px;height:22px;"><svg width="22" height="22" viewBox="-1 -1 22 22" style="display:block"><rect x="-0.500" y="-0.500" width="21" height="21" fill="#fff" stroke="#0e0e0e" stroke-width="1.200"/><g><rect x="9.500" y="3" width="1.500" height="14" fill="#f2c8ee"/></g></svg></div>
<div class="abs lname" style="left:211px;top:224.5px;letter-spacing:0.3px">&lt;Path&gt;</div>
<div class="abs" style="left:7px;top:244px;width:339px;height:1px;background:#5a5a5a"></div>
<div class="abs" style="left:11.5px;top:252.5px;width:16px;height:10px;"><svg width="14.600" height="9.100" viewBox="0 0 16 10"><path d="M0.900,5 C3,1.500 5.500,0.800 8,0.800 C10.500,0.800 13,1.500 15.100,5 C13,8.500 10.500,9.200 8,9.200 C5.500,9.200 3,8.500 0.900,5 Z" fill="none" stroke="#dadada" stroke-width="1.700"/><circle cx="8" cy="5" r="2.700" fill="#dadada"/><circle cx="8.800" cy="4.300" r="0.900" fill="#555"/></svg></div>
<div class="abs" style="left:60px;top:245px;width:4px;height:25px;background:#f04d4f"></div>
<div class="abs" style="left:182px;top:246.5px;width:22px;height:22px;"><svg width="22" height="22" viewBox="-1 -1 22 22" style="display:block"><rect x="-0.500" y="-0.500" width="21" height="21" fill="#fff" stroke="#0e0e0e" stroke-width="1.200"/><g><path d="M0,20 L0,18.500 L18.500,2 L20,2 L20,9.500 L8.500,20 Z" fill="#bd22bd"/></g></svg></div>
<div class="abs lname" style="left:211px;top:250.5px;letter-spacing:0.3px">&lt;Path&gt;</div>
<div class="abs" style="left:7px;top:270px;width:339px;height:1px;background:#5a5a5a"></div>
<div class="abs" style="left:11.5px;top:278.5px;width:16px;height:10px;"><svg width="14.600" height="9.100" viewBox="0 0 16 10"><path d="M0.900,5 C3,1.500 5.500,0.800 8,0.800 C10.500,0.800 13,1.500 15.100,5 C13,8.500 10.500,9.200 8,9.200 C5.500,9.200 3,8.500 0.900,5 Z" fill="none" stroke="#dadada" stroke-width="1.700"/><circle cx="8" cy="5" r="2.700" fill="#dadada"/><circle cx="8.800" cy="4.300" r="0.900" fill="#555"/></svg></div>
<div class="abs" style="left:60px;top:271px;width:4px;height:25px;background:#f04d4f"></div>
<div class="abs" style="left:158px;top:278px;width:8px;height:12px;"><svg width="8" height="12" viewBox="0 0 8 12"><path d="M1.800,1.800 L6,6 L1.800,10.200" fill="none" stroke="#f4f4f4" stroke-width="1.900" stroke-linecap="round" stroke-linejoin="round"/></svg></div>
<div class="abs" style="left:182px;top:272.5px;width:22px;height:22px;"><svg width="22" height="22" viewBox="-1 -1 22 22" style="display:block"><rect x="-0.500" y="-0.500" width="21" height="21" fill="#fff" stroke="#0e0e0e" stroke-width="1.200"/><g><rect x="1" y="9.300" width="18" height="1.400" fill="#c868c8"/></g></svg></div>
<div class="abs lname" style="left:211px;top:276.5px;letter-spacing:0.3px">&lt;Group&gt;</div>
<div class="abs" style="left:7px;top:296px;width:339px;height:1px;background:#5a5a5a"></div>
<div class="abs" style="left:11.5px;top:304.5px;width:16px;height:10px;"><svg width="14.600" height="9.100" viewBox="0 0 16 10"><path d="M0.900,5 C3,1.500 5.500,0.800 8,0.800 C10.500,0.800 13,1.500 15.100,5 C13,8.500 10.500,9.200 8,9.200 C5.500,9.200 3,8.500 0.900,5 Z" fill="none" stroke="#dadada" stroke-width="1.700"/><circle cx="8" cy="5" r="2.700" fill="#dadada"/><circle cx="8.800" cy="4.300" r="0.900" fill="#555"/></svg></div>
<div class="abs" style="left:60px;top:297px;width:4px;height:25px;background:#f04d4f"></div>
<div class="abs" style="left:182px;top:298.5px;width:22px;height:22px;"><svg width="22" height="22" viewBox="-1 -1 22 22" style="display:block"><rect x="-0.500" y="-0.500" width="21" height="21" fill="#fff" stroke="#0e0e0e" stroke-width="1.200"/><g><rect x="2" y="8" width="16" height="1" fill="#f0d8f0"/><rect x="2" y="12" width="16" height="1" fill="#f0d8f0"/></g></svg></div>
<div class="abs lname" style="left:211px;top:302.5px;letter-spacing:0.3px">&lt;Compound Path&gt;</div>
<div class="abs" style="left:7px;top:322px;width:339px;height:1px;background:#5a5a5a"></div>
<div class="abs" style="left:11.5px;top:330.5px;width:16px;height:10px;"><svg width="14.600" height="9.100" viewBox="0 0 16 10"><path d="M0.900,5 C3,1.500 5.500,0.800 8,0.800 C10.500,0.800 13,1.500 15.100,5 C13,8.500 10.500,9.200 8,9.200 C5.500,9.200 3,8.500 0.900,5 Z" fill="none" stroke="#dadada" stroke-width="1.700"/><circle cx="8" cy="5" r="2.700" fill="#dadada"/><circle cx="8.800" cy="4.300" r="0.900" fill="#555"/></svg></div>
<div class="abs" style="left:60px;top:323px;width:4px;height:25px;background:#f04d4f"></div>
<div class="abs" style="left:182px;top:324.5px;width:22px;height:22px;"><svg width="22" height="22" viewBox="-1 -1 22 22" style="display:block"><rect x="-0.500" y="-0.500" width="21" height="21" fill="#fff" stroke="#0e0e0e" stroke-width="1.200"/><g><rect x="1" y="9.300" width="18" height="1.400" fill="#c868c8"/></g></svg></div>
<div class="abs lname" style="left:211px;top:328.5px;letter-spacing:0.3px">&lt;Path&gt;</div>
<div class="abs" style="left:7px;top:348px;width:339px;height:1px;background:#5a5a5a"></div>
<div class="abs" style="left:11.5px;top:356.5px;width:16px;height:10px;"><svg width="14.600" height="9.100" viewBox="0 0 16 10"><path d="M0.900,5 C3,1.500 5.500,0.800 8,0.800 C10.500,0.800 13,1.500 15.100,5 C13,8.500 10.500,9.200 8,9.200 C5.500,9.200 3,8.500 0.900,5 Z" fill="none" stroke="#dadada" stroke-width="1.700"/><circle cx="8" cy="5" r="2.700" fill="#dadada"/><circle cx="8.800" cy="4.300" r="0.900" fill="#555"/></svg></div>
<div class="abs" style="left:60px;top:349px;width:4px;height:25px;background:#f04d4f"></div>
<div class="abs" style="left:182px;top:350.5px;width:22px;height:22px;"><svg width="22" height="22" viewBox="-1 -1 22 22" style="display:block"><rect x="-0.500" y="-0.500" width="21" height="21" fill="#fff" stroke="#0e0e0e" stroke-width="1.200"/><g><rect x="2" y="8" width="16" height="4" fill="#f3e4f3"/></g></svg></div>
<div class="abs lname" style="left:211px;top:354.5px;letter-spacing:0.3px">&lt;Path&gt;</div>
<div class="abs" style="left:7px;top:374px;width:339px;height:26px;background:#4b607b"></div>
<div class="abs" style="left:7px;top:374px;width:339px;height:1px;background:#5a5a5a"></div>
<div class="abs" style="left:11.5px;top:382.5px;width:16px;height:10px;"><svg width="14.600" height="9.100" viewBox="0 0 16 10"><path d="M0.900,5 C3,1.500 5.500,0.800 8,0.800 C10.500,0.800 13,1.500 15.100,5 C13,8.500 10.500,9.200 8,9.200 C5.500,9.200 3,8.500 0.900,5 Z" fill="none" stroke="#dadada" stroke-width="1.700"/><circle cx="8" cy="5" r="2.700" fill="#dadada"/><circle cx="8.800" cy="4.300" r="0.900" fill="#555"/></svg></div>
<div class="abs" style="left:60px;top:375px;width:4px;height:25px;background:#3f78ee"></div>
<div class="abs" style="left:73px;top:384px;width:12px;height:8px;"><svg width="12" height="8" viewBox="-0.600 -0.400 13.200 8.800"><path d="M1.800,1.800 L6,6 L10.200,1.800" fill="none" stroke="#f4f4f4" stroke-width="1.900" stroke-linecap="round" stroke-linejoin="round"/></svg></div>
<div class="abs" style="left:96px;top:376.5px;width:22px;height:22px;"><svg width="22" height="22" viewBox="-1 -1 22 22" style="display:block"><rect x="-0.500" y="-0.500" width="21" height="21" fill="#eefcff" stroke="#0e0e0e" stroke-width="1.200"/><g></g></svg></div>
<div class="abs lname" style="left:125px;top:380.5px;letter-spacing:0.2px">Text Box</div>
<div class="abs" style="left:7px;top:400px;width:339px;height:1px;background:#5a5a5a"></div>
<div class="abs" style="left:11.5px;top:408.5px;width:16px;height:10px;"><svg width="14.600" height="9.100" viewBox="0 0 16 10"><path d="M0.900,5 C3,1.500 5.500,0.800 8,0.800 C10.500,0.800 13,1.500 15.100,5 C13,8.500 10.500,9.200 8,9.200 C5.500,9.200 3,8.500 0.900,5 Z" fill="none" stroke="#dadada" stroke-width="1.700"/><circle cx="8" cy="5" r="2.700" fill="#dadada"/><circle cx="8.800" cy="4.300" r="0.900" fill="#555"/></svg></div>
<div class="abs" style="left:60px;top:401px;width:4px;height:25px;background:#3f78ee"></div>
<div class="abs" style="left:101px;top:410px;width:12px;height:8px;"><svg width="12" height="8" viewBox="-0.600 -0.400 13.200 8.800"><path d="M1.800,1.800 L6,6 L10.200,1.800" fill="none" stroke="#f4f4f4" stroke-width="1.900" stroke-linecap="round" stroke-linejoin="round"/></svg></div>
<div class="abs" style="left:125px;top:402.5px;width:22px;height:22px;"><svg width="22" height="22" viewBox="-1 -1 22 22" style="display:block"><rect x="-0.500" y="-0.500" width="21" height="21" fill="#eefcff" stroke="#0e0e0e" stroke-width="1.200"/><g></g></svg></div>
<div class="abs lname" style="left:154px;top:406.5px;letter-spacing:0.3px">&lt;Group&gt;</div>
<div class="abs" style="left:7px;top:426px;width:339px;height:1px;background:#5a5a5a"></div>
<div class="abs" style="left:11.5px;top:434.5px;width:16px;height:10px;"><svg width="14.600" height="9.100" viewBox="0 0 16 10"><path d="M0.900,5 C3,1.500 5.500,0.800 8,0.800 C10.500,0.800 13,1.500 15.100,5 C13,8.500 10.500,9.200 8,9.200 C5.500,9.200 3,8.500 0.900,5 Z" fill="none" stroke="#dadada" stroke-width="1.700"/><circle cx="8" cy="5" r="2.700" fill="#dadada"/><circle cx="8.800" cy="4.300" r="0.900" fill="#555"/></svg></div>
<div class="abs" style="left:60px;top:427px;width:4px;height:25px;background:#3f78ee"></div>
<div class="abs" style="left:129px;top:436px;width:12px;height:8px;"><svg width="12" height="8" viewBox="-0.600 -0.400 13.200 8.800"><path d="M1.800,1.800 L6,6 L10.200,1.800" fill="none" stroke="#f4f4f4" stroke-width="1.900" stroke-linecap="round" stroke-linejoin="round"/></svg></div>
<div class="abs" style="left:153px;top:428.5px;width:22px;height:22px;"><svg width="22" height="22" viewBox="-1 -1 22 22" style="display:block"><rect x="-0.500" y="-0.500" width="21" height="21" fill="#eefcff" stroke="#0e0e0e" stroke-width="1.200"/><g></g></svg></div>
<div class="abs lname" style="left:182px;top:432.5px;letter-spacing:0.3px">&lt;Group&gt;</div>
<div class="abs" style="left:7px;top:452px;width:339px;height:1px;background:#5a5a5a"></div>
<div class="abs" style="left:11.5px;top:460.5px;width:16px;height:10px;"><svg width="14.600" height="9.100" viewBox="0 0 16 10"><path d="M0.900,5 C3,1.500 5.500,0.800 8,0.800 C10.500,0.800 13,1.500 15.100,5 C13,8.500 10.500,9.200 8,9.200 C5.500,9.200 3,8.500 0.900,5 Z" fill="none" stroke="#dadada" stroke-width="1.700"/><circle cx="8" cy="5" r="2.700" fill="#dadada"/><circle cx="8.800" cy="4.300" r="0.900" fill="#555"/></svg></div>
<div class="abs" style="left:60px;top:453px;width:4px;height:25px;background:#3f78ee"></div>
<div class="abs" style="left:182px;top:454.5px;width:22px;height:22px;"><svg width="22" height="22" viewBox="-1 -1 22 22" style="display:block"><rect x="-0.500" y="-0.500" width="21" height="21" fill="#fff" stroke="#0e0e0e" stroke-width="1.200"/><g></g></svg></div>
<div class="abs lname" style="left:211px;top:458.5px;letter-spacing:0.3px">&lt;Path&gt;</div>
<div class="abs" style="left:7px;top:478px;width:339px;height:1px;background:#5a5a5a"></div>
<div class="abs" style="left:11.5px;top:486.5px;width:16px;height:10px;"><svg width="14.600" height="9.100" viewBox="0 0 16 10"><path d="M0.900,5 C3,1.500 5.500,0.800 8,0.800 C10.500,0.800 13,1.500 15.100,5 C13,8.500 10.500,9.200 8,9.200 C5.500,9.200 3,8.500 0.900,5 Z" fill="none" stroke="#dadada" stroke-width="1.700"/><circle cx="8" cy="5" r="2.700" fill="#dadada"/><circle cx="8.800" cy="4.300" r="0.900" fill="#555"/></svg></div>
<div class="abs" style="left:60px;top:479px;width:4px;height:25px;background:#3f78ee"></div>
<div class="abs" style="left:182px;top:480.5px;width:22px;height:22px;"><svg width="22" height="22" viewBox="-1 -1 22 22" style="display:block"><rect x="-0.500" y="-0.500" width="21" height="21" fill="#f4feff" stroke="#0e0e0e" stroke-width="1.200"/><g><path d="M0,20 L0,17 L16,1 L20,1 L20,4.500 L5,20 Z" fill="#6ee9f6"/></g></svg></div>
<div class="abs lname" style="left:211px;top:484.5px;letter-spacing:0.3px">&lt;Path&gt;</div>
<div class="abs" style="left:7px;top:504px;width:339px;height:1px;background:#5a5a5a"></div>
<div class="abs" style="left:11.5px;top:512.5px;width:16px;height:10px;"><svg width="14.600" height="9.100" viewBox="0 0 16 10"><path d="M0.900,5 C3,1.500 5.500,0.800 8,0.800 C10.500,0.800 13,1.500 15.100,5 C13,8.500 10.500,9.200 8,9.200 C5.500,9.200 3,8.500 0.900,5 Z" fill="none" stroke="#dadada" stroke-width="1.700"/><circle cx="8" cy="5" r="2.700" fill="#dadada"/><circle cx="8.800" cy="4.300" r="0.900" fill="#555"/></svg></div>
<div class="abs" style="left:60px;top:505px;width:4px;height:25px;background:#3f78ee"></div>
<div class="abs" style="left:182px;top:506.5px;width:22px;height:22px;"><svg width="22" height="22" viewBox="-1 -1 22 22" style="display:block"><rect x="-0.500" y="-0.500" width="21" height="21" fill="#fff" stroke="#0e0e0e" stroke-width="1.200"/><g></g></svg></div>
<div class="abs lname" style="left:211px;top:510.5px;letter-spacing:0.3px">&lt;Path&gt;</div>
<div class="abs" style="left:7px;top:530px;width:339px;height:1px;background:#5a5a5a"></div>
<div class="abs" style="left:11.5px;top:538.5px;width:16px;height:10px;"><svg width="14.600" height="9.100" viewBox="0 0 16 10"><path d="M0.900,5 C3,1.500 5.500,0.800 8,0.800 C10.500,0.800 13,1.500 15.100,5 C13,8.500 10.500,9.200 8,9.200 C5.500,9.200 3,8.500 0.900,5 Z" fill="none" stroke="#dadada" stroke-width="1.700"/><circle cx="8" cy="5" r="2.700" fill="#dadada"/><circle cx="8.800" cy="4.300" r="0.900" fill="#555"/></svg></div>
<div class="abs" style="left:60px;top:531px;width:4px;height:25px;background:#3f78ee"></div>
<div class="abs" style="left:182px;top:532.5px;width:22px;height:22px;"><svg width="22" height="22" viewBox="-1 -1 22 22" style="display:block"><rect x="-0.500" y="-0.500" width="21" height="21" fill="#f4feff" stroke="#0e0e0e" stroke-width="1.200"/><g><path d="M0,20 L0,17 L16,1 L20,1 L20,4.500 L5,20 Z" fill="#6ee9f6"/></g></svg></div>
<div class="abs lname" style="left:211px;top:536.5px;letter-spacing:0.3px">&lt;Path&gt;</div>
<div class="abs" style="left:7px;top:556px;width:339px;height:1px;background:#5a5a5a"></div>
<div class="abs" style="left:11.5px;top:564.5px;width:16px;height:10px;"><svg width="14.600" height="9.100" viewBox="0 0 16 10"><path d="M0.900,5 C3,1.500 5.500,0.800 8,0.800 C10.500,0.800 13,1.500 15.100,5 C13,8.500 10.500,9.200 8,9.200 C5.500,9.200 3,8.500 0.900,5 Z" fill="none" stroke="#dadada" stroke-width="1.700"/><circle cx="8" cy="5" r="2.700" fill="#dadada"/><circle cx="8.800" cy="4.300" r="0.900" fill="#555"/></svg></div>
<div class="abs" style="left:60px;top:557px;width:4px;height:25px;background:#3f78ee"></div>
<div class="abs" style="left:158px;top:564px;width:8px;height:12px;"><svg width="8" height="12" viewBox="0 0 8 12"><path d="M1.800,1.800 L6,6 L1.800,10.200" fill="none" stroke="#f4f4f4" stroke-width="1.900" stroke-linecap="round" stroke-linejoin="round"/></svg></div>
<div class="abs" style="left:182px;top:558.5px;width:22px;height:22px;"><svg width="22" height="22" viewBox="-1 -1 22 22" style="display:block"><rect x="-0.500" y="-0.500" width="21" height="21" fill="#f6feff" stroke="#0e0e0e" stroke-width="1.200"/><g><rect x="1" y="9.500" width="18" height="1" fill="#9feaf5"/></g></svg></div>
<div class="abs lname" style="left:211px;top:562.5px;letter-spacing:0.3px">&lt;Group&gt;</div>
<div class="abs" style="left:7px;top:582px;width:339px;height:1px;background:#5a5a5a"></div>
<div class="abs" style="left:11.5px;top:590.5px;width:16px;height:10px;"><svg width="14.600" height="9.100" viewBox="0 0 16 10"><path d="M0.900,5 C3,1.500 5.500,0.800 8,0.800 C10.500,0.800 13,1.500 15.100,5 C13,8.500 10.500,9.200 8,9.200 C5.500,9.200 3,8.500 0.900,5 Z" fill="none" stroke="#dadada" stroke-width="1.700"/><circle cx="8" cy="5" r="2.700" fill="#dadada"/><circle cx="8.800" cy="4.300" r="0.900" fill="#555"/></svg></div>
<div class="abs" style="left:60px;top:583px;width:4px;height:25px;background:#3f78ee"></div>
<div class="abs" style="left:182px;top:584.5px;width:22px;height:22px;"><svg width="22" height="22" viewBox="-1 -1 22 22" style="display:block"><rect x="-0.500" y="-0.500" width="21" height="21" fill="#fff" stroke="#0e0e0e" stroke-width="1.200"/><g></g></svg></div>
<div class="abs lname" style="left:211px;top:588.5px;letter-spacing:0.3px">&lt;Compound Path&gt;</div>
<div class="abs" style="left:7px;top:608px;width:339px;height:1px;background:#5a5a5a"></div>
<div class="abs" style="left:11.5px;top:616.5px;width:16px;height:10px;"><svg width="14.600" height="9.100" viewBox="0 0 16 10"><path d="M0.900,5 C3,1.500 5.500,0.800 8,0.800 C10.500,0.800 13,1.500 15.100,5 C13,8.500 10.500,9.200 8,9.200 C5.500,9.200 3,8.500 0.900,5 Z" fill="none" stroke="#dadada" stroke-width="1.700"/><circle cx="8" cy="5" r="2.700" fill="#dadada"/><circle cx="8.800" cy="4.300" r="0.900" fill="#555"/></svg></div>
<div class="abs" style="left:60px;top:609px;width:4px;height:25px;background:#3f78ee"></div>
<div class="abs" style="left:182px;top:610.5px;width:22px;height:22px;"><svg width="22" height="22" viewBox="-1 -1 22 22" style="display:block"><rect x="-0.500" y="-0.500" width="21" height="21" fill="#f6feff" stroke="#0e0e0e" stroke-width="1.200"/><g><rect x="1" y="9.500" width="18" height="1" fill="#9feaf5"/></g></svg></div>
<div class="abs lname" style="left:211px;top:614.5px;letter-spacing:0.3px">&lt;Path&gt;</div>
<div class="abs" style="left:7px;top:634px;width:339px;height:1px;background:#5a5a5a"></div>
<div class="abs" style="left:11.5px;top:642.5px;width:16px;height:10px;"><svg width="14.600" height="9.100" viewBox="0 0 16 10"><path d="M0.900,5 C3,1.500 5.500,0.800 8,0.800 C10.500,0.800 13,1.500 15.100,5 C13,8.500 10.500,9.200 8,9.200 C5.500,9.200 3,8.500 0.900,5 Z" fill="none" stroke="#dadada" stroke-width="1.700"/><circle cx="8" cy="5" r="2.700" fill="#dadada"/><circle cx="8.800" cy="4.300" r="0.900" fill="#555"/></svg></div>
<div class="abs" style="left:60px;top:635px;width:4px;height:25px;background:#3f78ee"></div>
<div class="abs" style="left:182px;top:636.5px;width:22px;height:22px;"><svg width="22" height="22" viewBox="-1 -1 22 22" style="display:block"><rect x="-0.500" y="-0.500" width="21" height="21" fill="#eefcff" stroke="#0e0e0e" stroke-width="1.200"/><g></g></svg></div>
<div class="abs lname" style="left:211px;top:640.5px;letter-spacing:0.3px">&lt;Path&gt;</div>
<div class="abs" style="left:7px;top:660px;width:339px;height:1px;background:#5a5a5a"></div>
<div class="abs" style="left:11.5px;top:668.5px;width:16px;height:10px;"><svg width="14.600" height="9.100" viewBox="0 0 16 10"><path d="M0.900,5 C3,1.500 5.500,0.800 8,0.800 C10.500,0.800 13,1.500 15.100,5 C13,8.500 10.500,9.200 8,9.200 C5.500,9.200 3,8.500 0.900,5 Z" fill="none" stroke="#dadada" stroke-width="1.700"/><circle cx="8" cy="5" r="2.700" fill="#dadada"/><circle cx="8.800" cy="4.300" r="0.900" fill="#555"/></svg></div>
<div class="abs" style="left:60px;top:661px;width:4px;height:25px;background:#3fe04b"></div>
<div class="abs" style="left:73px;top:668px;width:8px;height:12px;"><svg width="8" height="12" viewBox="0 0 8 12"><path d="M1.800,1.800 L6,6 L1.800,10.200" fill="none" stroke="#f4f4f4" stroke-width="1.900" stroke-linecap="round" stroke-linejoin="round"/></svg></div>
<div class="abs" style="left:96px;top:662.5px;width:22px;height:22px;"><svg width="22" height="22" viewBox="-1 -1 22 22" style="display:block"><rect x="-0.500" y="-0.500" width="21" height="21" fill="#000" stroke="#0e0e0e" stroke-width="1.200"/><g></g></svg></div>
<div class="abs lname" style="left:125px;top:666.5px;letter-spacing:0.1px">Background</div>
<div class="abs" style="left:7px;top:686px;width:339px;height:1px;background:#5a5a5a"></div>
<div class="abs" style="left:32px;top:88px;width:1px;height:598px;background:#5a5a5a"></div>
<div class="abs" style="left:57px;top:88px;width:1px;height:598px;background:#5a5a5a"></div>
<div class="abs" style="left:7px;top:88px;width:1px;height:629px;background:#5a5a5a"></div>
<div class="abs" style="left:7px;top:724px;font-size:13px;color:#e0e0e0;line-height:16px;white-space:nowrap">3 Layers</div>
<svg class="abs" style="left:300px;top:722px" width="20" height="18" viewBox="0 0 20 18"><path d="M4.500,1 V13.500 H17 M1,4.500 H13.500 V8" fill="none" stroke="#d8d8d8" stroke-width="1.400"/><path d="M12,10 h6 v7 l-3,-2 -3,2z" fill="#d8d8d8"/></svg>
<svg class="abs" style="left:330px;top:722px" width="18" height="18" viewBox="0 0 18 18"><path d="M8,3.500 H2.500 V15.500 H14.500 V10" fill="none" stroke="#d8d8d8" stroke-width="1.400"/><path d="M10,2 H16 V8 M16,2 L9,9" fill="none" stroke="#d8d8d8" stroke-width="1.400"/></svg>
</div><!--/LAY-->
</body></html>
